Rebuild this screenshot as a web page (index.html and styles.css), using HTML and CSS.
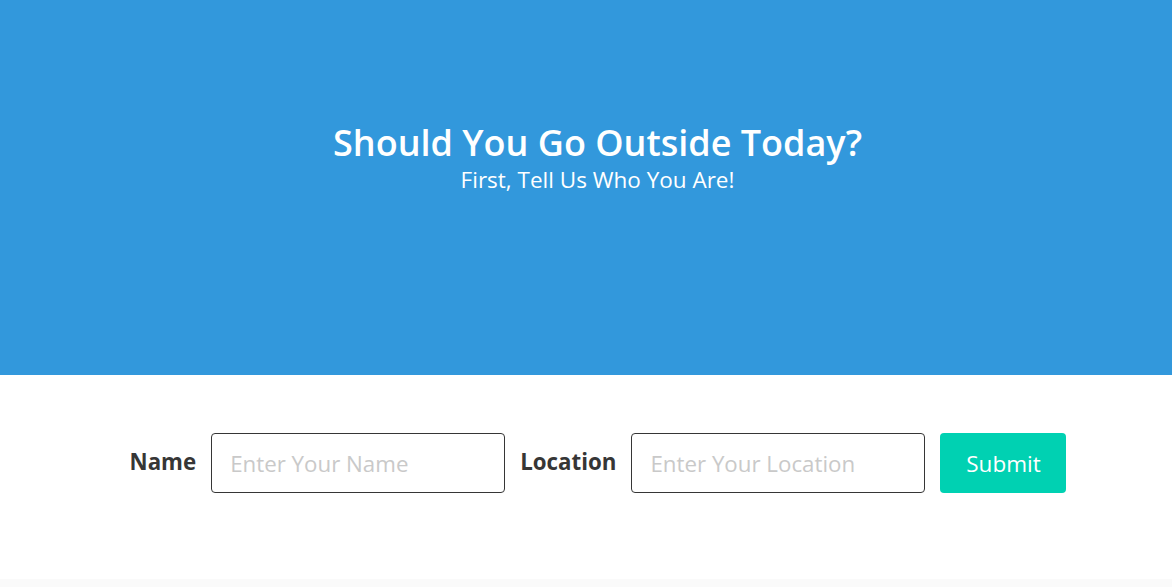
FILE: index.html
```html
<!DOCTYPE html>
<html lang="en">
<head>
<meta charset="utf-8">
<title>Should You Go Outside Today?</title>
<link rel="stylesheet" href="styles.css">
</head>
<body>
<section class="hero">
  <div class="hero-body">
    <h1 class="title">Should You Go Outside Today?</h1>
    <h2 class="subtitle">First, Tell Us Who You Are!</h2>
  </div>
</section>
<section class="form-section">
  <form class="form-row">
    <label class="label" for="name">Name</label>
    <input class="input" id="name" type="text" placeholder="Enter Your Name">
    <label class="label" for="location">Location</label>
    <input class="input" id="location" type="text" placeholder="Enter Your Location">
    <button class="button" type="button">Submit</button>
  </form>
</section>
<footer class="footer"></footer>
</body>
</html>
```

FILE: styles.css
```css
* { box-sizing: border-box; }
html, body {
  margin: 0;
  padding: 0;
  background: #fff;
  font-family: "Open Sans", "Noto Sans", sans-serif;
  color: #363636;
}
.hero {
  background: #3298dc;
  height: 375px;
  display: flex;
  flex-direction: column;
  align-items: center;
  padding-top: 120px;
  padding-left: 23px;
}
.hero-body {
  text-align: center;
  color: #fff;
}
.title {
  margin: 0;
  font-size: 36px;
  font-weight: 600;
  line-height: 46px;
  color: #fff;
}
.subtitle {
  margin: 0;
  font-size: 22.5px;
  font-weight: 400;
  line-height: 28px;
  color: #fff;
}
.form-section {
  height: 204px;
  display: flex;
  justify-content: center;
  padding-top: 58px;
  padding-left: 24px;
}
.form-row {
  display: flex;
  align-items: center;
  gap: 15px;
  height: 60px;
}
.label {
  font-size: 22.3px;
  font-weight: 700;
  color: #363636;
  padding-bottom: 4px;
}
.input {
  width: 294px;
  height: 60px;
  border: 1px solid #363636;
  border-radius: 4px;
  padding: 1px 17px 0 18px;
  font-family: inherit;
  font-size: 22.3px;
  color: #363636;
  background: #fff;
}
.input::placeholder {
  color: #c9c9c9;
}
.button {
  width: 126px;
  height: 60px;
  border: none;
  border-radius: 4px;
  background: #00d1b2;
  color: #fff;
  font-family: inherit;
  font-size: 22.5px;
}
.footer {
  height: 8px;
  background: #fafafa;
}
```
